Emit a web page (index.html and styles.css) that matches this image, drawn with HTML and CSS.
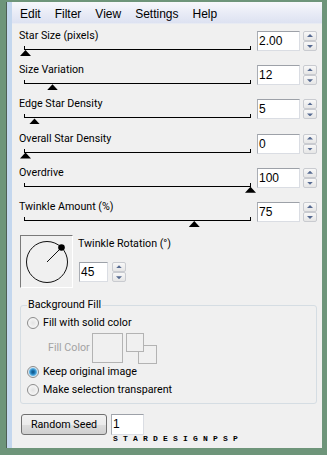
FILE: index.html
```html
<!DOCTYPE html>
<html lang="en">
<head>
    <meta charset="UTF-8" />
    <meta name="viewport" content="width=device-width, initial-scale=1" />
    <title>Star Filter</title>
    <link rel="stylesheet" href="styles.css">
</head>
<body>

<div class="window">
    <div class="strip"></div>
    <div class="panel">
        <div class="menubar">
            <span>Edit</span>
            <span>Filter</span>
            <span>View</span>
            <span>Settings</span>
            <span>Help</span>
        </div>

        <div class="sliders">
            <div class="row">
                <div class="row-left">
                    <div class="label">Star Size (pixels)</div>
                    <div class="slider"><span class="thumb" style="left:0%"></span></div>
                </div>
                <div class="num">2.00</div>
                <div class="spin"><span class="up"></span><span class="down"></span></div>
            </div>
            <div class="row">
                <div class="row-left">
                    <div class="label">Size Variation</div>
                    <div class="slider"><span class="thumb" style="left:12%"></span></div>
                </div>
                <div class="num">12</div>
                <div class="spin"><span class="up"></span><span class="down"></span></div>
            </div>
            <div class="row">
                <div class="row-left">
                    <div class="label">Edge Star Density</div>
                    <div class="slider"><span class="thumb" style="left:4%"></span></div>
                </div>
                <div class="num">5</div>
                <div class="spin"><span class="up"></span><span class="down"></span></div>
            </div>
            <div class="row">
                <div class="row-left">
                    <div class="label">Overall Star Density</div>
                    <div class="slider"><span class="thumb" style="left:0%"></span></div>
                </div>
                <div class="num">0</div>
                <div class="spin"><span class="up"></span><span class="down"></span></div>
            </div>
            <div class="row">
                <div class="row-left">
                    <div class="label">Overdrive</div>
                    <div class="slider"><span class="thumb" style="left:100%"></span></div>
                </div>
                <div class="num">100</div>
                <div class="spin"><span class="up"></span><span class="down"></span></div>
            </div>
            <div class="row">
                <div class="row-left">
                    <div class="label">Twinkle Amount (%)</div>
                    <div class="slider"><span class="thumb" style="left:75%"></span></div>
                </div>
                <div class="num">75</div>
                <div class="spin"><span class="up"></span><span class="down"></span></div>
            </div>
        </div>

        <div class="rotation">
            <div class="dial">
                <svg width="51" height="51" viewBox="0 0 51 51">
                    <circle cx="26" cy="26" r="20.5" fill="none" stroke="#111" stroke-width="1"/>
                    <line x1="26" y1="26" x2="40.5" y2="11.5" stroke="#111" stroke-width="1"/>
                    <circle cx="40.5" cy="11.5" r="3.3" fill="#000"/>
                </svg>
            </div>
            <div class="rotation-right">
                <div class="label">Twinkle Rotation (°)</div>
                <div class="rot-input">
                    <div class="num small">45</div>
                    <div class="spin"><span class="up"></span><span class="down"></span></div>
                </div>
            </div>
        </div>

        <fieldset class="group">
            <legend>Background Fill</legend>
            <label class="opt first"><input type="radio" name="fill"> Fill with solid color</label>
            <div class="fill-row">
                <span class="fill-label">Fill Color</span>
                <span class="swatch"></span>
                <span class="swap">
                    <span class="sq sq-a"></span>
                    <span class="sq sq-b"></span>
                </span>
            </div>
            <label class="opt keep"><input type="radio" name="fill" checked> Keep original image</label>
            <label class="opt make"><input type="radio" name="fill"> Make selection transparent</label>
        </fieldset>

        <div class="seed-row">
            <button class="btn">Random Seed</button>
            <div class="num seed">1</div>
        </div>
        <div class="mark">STARDESIGNPSP</div>
    </div>
</div>

</body>
</html>
```

FILE: styles.css
```css
body {
    margin: 0;
    padding: 0;
    background-color: #6e957a;
    font-family: Roboto, "Liberation Sans", sans-serif;
    color: #000;
}
.window {
    display: flex;
    height: 446px;
    margin: 2px 5px 0 6px;
    border-left: 1px solid #4e5f55;
}
.strip {
    width: 5px;
    background: #c4d7ee;
}
.panel {
    flex: 1;
    background: #f0f0f0;
}
.menubar {
    display: flex;
    gap: 14px;
    height: 22px;
    padding: 3px 0 0 8px;
    box-sizing: border-box;
    border-bottom: 1px solid #e8ebf3;
    background: linear-gradient(#f7f8fc, #e8ebf6 55%, #dde2f1);
    font-family: "Liberation Sans", Arial, sans-serif;
    font-size: 12px;
    line-height: 19px;
}
.sliders {
    padding-top: 5px;
}
.row {
    display: flex;
    height: 34.2px;
    padding-left: 7px;
}
.row-left {
    width: 238px;
}
.label {
    font-size: 10.7px;
    line-height: 14px;
    white-space: nowrap;
}
.slider {
    position: relative;
    width: 225px;
    height: 3px;
    margin: 3px 0 0 5px;
    border: 1px solid #000;
    border-top: none;
}
.thumb {
    position: absolute;
    top: 4px;
    width: 11px;
    height: 6px;
    margin-left: -5px;
    background: #000;
    clip-path: polygon(50% 0, 100% 100%, 0 100%);
}
.num {
    width: 43px;
    height: 20px;
    margin-top: 2px;
    box-sizing: border-box;
    padding-left: 1px;
    background: #fff;
    border: 1px solid #dadde3;
    border-top-color: #9da1a8;
    border-left-color: #a9adb4;
    font-family: "Liberation Sans", Arial, sans-serif;
    font-size: 12px;
    line-height: 18px;
}
.spin {
    display: flex;
    flex-direction: column;
    width: 14px;
    height: 20px;
    margin: 2px 0 0 3px;
}
.spin span {
    position: relative;
    flex: 1;
    border: 1px solid #c9cbd0;
    border-radius: 2px;
    background: linear-gradient(#f8f8f8, #e6e6e6);
}
.spin span::after {
    content: "";
    position: absolute;
    left: 3px;
    top: 2px;
    width: 6px;
    height: 3px;
    background: #566a91;
}
.spin .up::after {
    clip-path: polygon(50% 0, 100% 100%, 0 100%);
}
.spin .down::after {
    top: 3px;
    clip-path: polygon(0 0, 100% 0, 50% 100%);
}
.rotation {
    display: flex;
    margin-top: 1px;
    padding-left: 8px;
}
.dial {
    width: 51px;
    height: 51px;
    border: 1px solid #fff;
    border-top-color: #7a7a7a;
    border-left-color: #7a7a7a;
}
.dial svg {
    display: block;
}
.rotation-right {
    margin-left: 5px;
}
.rotation-right .label {
    margin-top: 2px;
}
.rot-input {
    display: flex;
    margin: 9px 0 0 1px;
}
.num.small {
    width: 29px;
}
.rot-input .spin {
    margin-left: 4px;
}
.group {
    margin: 10px 5px 0 8px;
    padding: 0 6px 5px 6px;
    border: 1px solid #d5dde3;
    border-radius: 3px;
    font-size: 10.7px;
}
.group legend {
    padding: 0 1px;
    line-height: 14px;
}
.opt {
    display: flex;
    align-items: center;
    height: 16px;
    line-height: 16px;
}
.opt.first {
    margin-top: 3px;
}
.opt.keep {
    margin-top: 1px;
}
.opt.make {
    margin-top: 2px;
}
.opt input {
    appearance: none;
    width: 12px;
    height: 12px;
    margin: 0 4px 0 0;
    border: 1px solid #8c8c8c;
    border-radius: 50%;
    background: radial-gradient(circle, #e3e3e3 0, #f6f6f6 5px);
}
.opt input:checked {
    background: radial-gradient(circle, #0f4f7e 0, #1e7ab8 2px, #5fb3e3 3.5px, #d8e8f3 4.5px, #f3f3f3 6px);
}
.fill-row {
    display: flex;
    height: 30px;
    margin-top: 2px;
    padding-left: 21px;
}
.fill-label {
    width: 44px;
    color: #a3a3a3;
    line-height: 30px;
    white-space: nowrap;
}
.swatch {
    width: 31px;
    height: 30px;
    box-sizing: border-box;
    border: 1px solid #b3b3b3;
}
.swap {
    position: relative;
    width: 31px;
    margin-left: 3px;
}
.sq {
    position: absolute;
    box-sizing: border-box;
    border: 1px solid #b3b3b3;
    background: #f0f0f0;
}
.sq-a {
    left: 0;
    top: 0;
    width: 18px;
    height: 19px;
    z-index: 1;
}
.sq-b {
    left: 12px;
    top: 12px;
    width: 19px;
    height: 19px;
}
.seed-row {
    display: flex;
    margin: 10px 0 0 9px;
}
.btn {
    width: 86px;
    height: 21px;
    padding: 0;
    border: 1px solid #707070;
    border-radius: 3px;
    background: linear-gradient(#f2f2f2, #ebebeb 50%, #dddddd 51%, #cfcfcf);
    font-family: Roboto, "Liberation Sans", sans-serif;
    font-size: 10.7px;
    color: #000;
}
.num.seed {
    width: 33px;
    height: 21px;
    margin: 0 0 0 4px;
}
.mark {
    margin-left: 101px;
    font-family: "Liberation Mono", monospace;
    font-size: 8px;
    font-weight: bold;
    line-height: 7px;
    letter-spacing: 5.2px;
}
```
